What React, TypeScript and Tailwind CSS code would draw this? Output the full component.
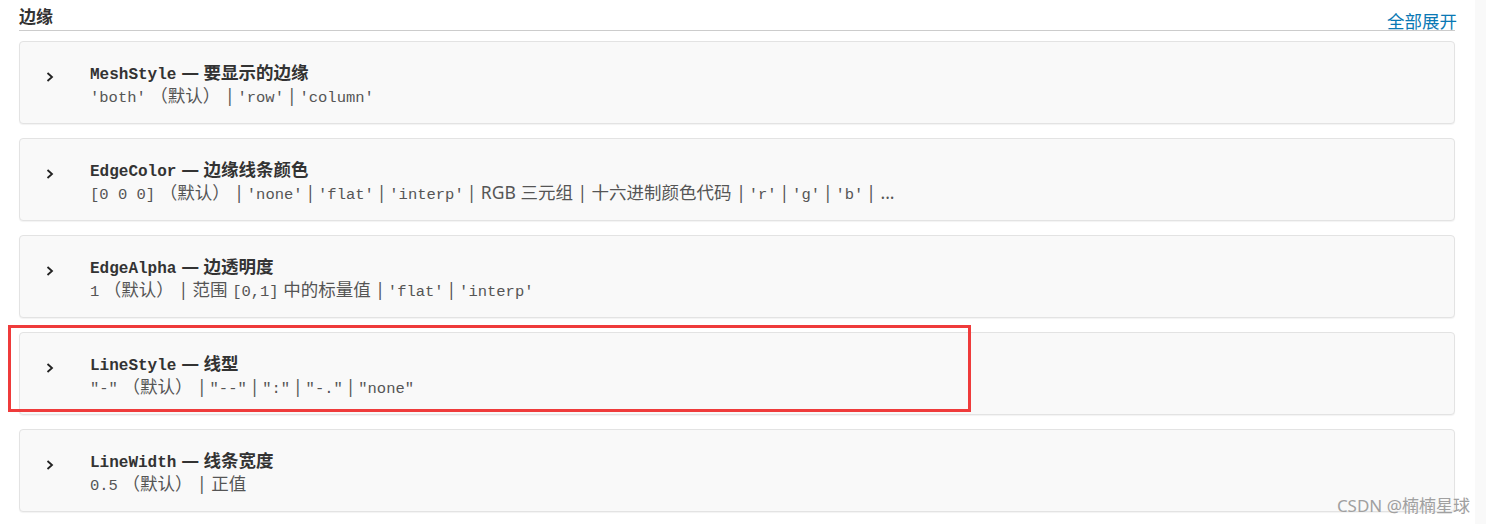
const mono = "font-['Liberation_Mono','DejaVu_Sans_Mono',monospace]";
const sans = "font-['Noto_Sans','Noto_Sans_CJK_SC',sans-serif]";

type Prop = {
  name: string;
  desc: string;
  values: { text: string; code?: boolean }[];
};

// thin-spaced separator between two code values
const bar = '\u2009|\u2009';

const props: Prop[] = [
  {
    name: 'MeshStyle',
    desc: '要显示的边缘',
    values: [
      { text: "'both'", code: true },
      { text: ' （默认） |\u2009' },
      { text: "'row'", code: true },
      { text: bar },
      { text: "'column'", code: true },
    ],
  },
  {
    name: 'EdgeColor',
    desc: '边缘线条颜色',
    values: [
      { text: '[0 0 0]', code: true },
      { text: ' （默认） |\u2009' },
      { text: "'none'", code: true },
      { text: bar },
      { text: "'flat'", code: true },
      { text: bar },
      { text: "'interp'", code: true },
      { text: '\u2009| RGB 三元组 | 十六进制颜色代码 |\u2009' },
      { text: "'r'", code: true },
      { text: bar },
      { text: "'g'", code: true },
      { text: bar },
      { text: "'b'", code: true },
      { text: '\u2009| ...' },
    ],
  },
  {
    name: 'EdgeAlpha',
    desc: '边透明度',
    values: [
      { text: '1', code: true },
      { text: ' （默认） | 范围 ' },
      { text: '[0,1]', code: true },
      { text: ' 中的标量值 |\u2009' },
      { text: "'flat'", code: true },
      { text: bar },
      { text: "'interp'", code: true },
    ],
  },
  {
    name: 'LineStyle',
    desc: '线型',
    values: [
      { text: '"-"', code: true },
      { text: ' （默认） |\u2009' },
      { text: '"--"', code: true },
      { text: bar },
      { text: '":"', code: true },
      { text: bar },
      { text: '"-."', code: true },
      { text: bar },
      { text: '"none"', code: true },
    ],
  },
  {
    name: 'LineWidth',
    desc: '线条宽度',
    values: [
      { text: '0.5', code: true },
      { text: ' （默认） | 正值' },
    ],
  },
];

const Chevron = () => (
  <svg width="10" height="12" viewBox="0 0 10 12" className="shrink-0">
    <path d="M2.5 2 L7 6 L2.5 10" fill="none" stroke="#222" strokeWidth="1.8" />
  </svg>
);

const PropCard = ({ prop, marked }: { prop: Prop; marked?: boolean }) => (
  <div className="relative">
    <div className="flex items-start h-[83px] rounded-[4px] border border-[#e3e3e3] bg-[#f9f9f9] shadow-[0_1px_1px_rgba(0,0,0,0.05)]">
      <div className="w-[70px] pl-[25px] pt-[29px]">
        <Chevron />
      </div>
      <div className="pt-[17px]">
        <div className="flex items-baseline h-[23px] text-[#333]">
          <span className={`${mono} font-bold text-[16px]`}>{prop.name}</span>
          <span className={`${sans} font-bold text-[17.5px] ml-[5px]`}>— {prop.desc}</span>
        </div>
        <div className={`flex items-baseline h-[24px] text-[#555] whitespace-pre ${sans} text-[17.5px]`}>
          {prop.values.map((v, i) =>
            v.code ? (
              <span key={i} className={`${mono} text-[15.5px]`}>
                {v.text}
              </span>
            ) : (
              <span key={i}>{v.text}</span>
            )
          )}
        </div>
      </div>
    </div>
    {marked && (
      <div className="absolute -left-[11px] -top-[7px] w-[963px] h-[87px] border-[3px] border-[#ef3b3b]" />
    )}
  </div>
);

export default function App() {
  return (
    <div className="relative flex h-[524px] bg-white overflow-hidden">
      <div className="flex-1 pl-[19px] pr-[20px]">
        <div className="relative border-b border-[#cccccc] h-[31px]">
          <h3 className={`${sans} font-bold text-[17px] text-[#333] leading-[24px] pt-[5px]`}>边缘</h3>
          <a className={`${sans} absolute -right-[2px] top-[9px] text-[17.5px] leading-[24px] text-[#0a78b4]`}>
            全部展开
          </a>
        </div>
        <div className="flex flex-col gap-[14px] pt-[10px]">
          {props.map((p) => (
            <PropCard key={p.name} prop={p} marked={p.name === 'LineStyle'} />
          ))}
        </div>
      </div>
      <div className="w-[11px] bg-[#f9f9f9]" />
      <div className={`${sans} absolute right-[16px] bottom-[8px] text-[17px] text-[#a0a0a0] leading-[20px]`}>
        CSDN @楠楠星球
      </div>
    </div>
  );
}
